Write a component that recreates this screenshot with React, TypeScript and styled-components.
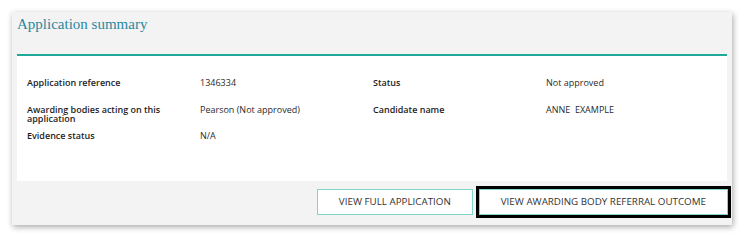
import React from "react";
import styled, { createGlobalStyle } from "styled-components";

const Global = createGlobalStyle`
  html, body { margin: 0; padding: 0; background: #ffffff; }
  body { font-family: "Open Sans", "Liberation Sans", sans-serif; }
`;

const Page = styled.div`
  padding: 12px 18px 18px 12px;
  width: 720px;
`;

const Card = styled.section`
  background: #f3f3f3;
  box-shadow: 1px 2px 6px rgba(0, 0, 0, 0.35);
  padding: 0 4px 10px 5px;
`;

const Header = styled.header`
  height: 42px;
  display: flex;
  align-items: flex-start;
`;

const Title = styled.h2`
  margin: 0;
  padding-top: 1px;
  font-family: "Liberation Serif", "DejaVu Serif", serif;
  font-weight: 400;
  font-size: 15px;
  line-height: 22px;
  color: #2a88a0;
`;

const Panel = styled.div`
  background: #ffffff;
  border-top: 2px solid #1fa998;
  padding: 22px 8px 23px 10px;
  margin-right: 1px;
`;

const Row = styled.div`
  display: grid;
  grid-template-columns: repeat(4, 1fr);
  min-height: 26.5px;
  align-items: start;
`;

const Label = styled.div`
  font-size: 9px;
  line-height: 9px;
  font-weight: 600;
  color: #1e1e1e;
  padding-right: 30px;
`;

const Value = styled.div`
  font-size: 9px;
  line-height: 9px;
  font-weight: 400;
  color: #2b2b2b;
  white-space: pre;
`;

const Actions = styled.div`
  display: flex;
  justify-content: flex-end;
  align-items: center;
  gap: 6px;
  padding-top: 8px;
`;

const Button = styled.button<{ $focused?: boolean }>`
  height: 26px;
  padding: 0 21px;
  background: #ffffff;
  border: 1px solid #80d5cb;
  font-family: "Open Sans", "Liberation Sans", sans-serif;
  font-size: 9.8px;
  color: #333333;
  text-transform: uppercase;
  cursor: pointer;
  outline: ${(p) => (p.$focused ? "3px solid #000000" : "none")};
  outline-offset: 0;
`;

const rows: [string, string, string, string][] = [
  ["Application reference", "1346334", "Status", "Not approved"],
  ["Awarding bodies acting on this application", "Pearson (Not approved)", "Candidate name", "ANNE  EXAMPLE"],
  ["Evidence status", "N/A", "", ""],
];

export default function App() {
  return (
    <>
      <Global />
      <Page>
        <Card>
          <Header>
            <Title>Application summary</Title>
          </Header>
          <Panel>
            {rows.map((r, i) => (
              <Row key={i}>
                <Label>{r[0]}</Label>
                <Value>{r[1]}</Value>
                <Label>{r[2]}</Label>
                <Value>{r[3]}</Value>
              </Row>
            ))}
          </Panel>
          <Actions>
            <Button>View full application</Button>
            <Button $focused>View awarding body referral outcome</Button>
          </Actions>
        </Card>
      </Page>
    </>
  );
}
